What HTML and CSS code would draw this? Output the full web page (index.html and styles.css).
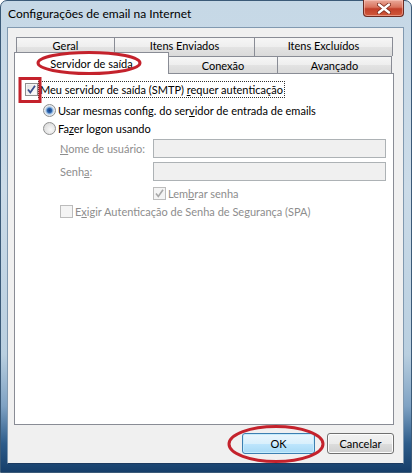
FILE: index.html
```html
<!DOCTYPE html>
<html lang="pt-BR">
<head>
<meta charset="utf-8">
<title>Configurações de email na Internet</title>
<link rel="stylesheet" href="styles.css">
</head>
<body>
<div class="window">
  <div class="titlebar">
    <span class="title">Configurações de email na Internet</span>
    <div class="close">
      <svg width="14" height="11" viewBox="0 0 14 11"><path d="M2 1.5 L12 9.5 M12 1.5 L2 9.5" stroke="#7a2a1c" stroke-width="4" stroke-linecap="round"/><path d="M2 1.5 L12 9.5 M12 1.5 L2 9.5" stroke="#fff" stroke-width="2.4" stroke-linecap="round"/></svg>
    </div>
  </div>
  <div class="client">
    <div class="tabs">
      <div class="tabrow back">
        <div class="tab t-geral">Geral</div>
        <div class="tab t-env">Itens Enviados</div>
        <div class="tab t-exc">Itens Excluídos</div>
      </div>
      <div class="tabrow front">
        <div class="tab selected t-serv">Servidor de saída</div>
        <div class="tab t-con">Conexão</div>
        <div class="tab t-ava">Avançado</div>
      </div>
      <div class="panel">
        <div class="row row-a">
          <span class="check"><svg width="13" height="13" viewBox="0 0 13 13"><path d="M3 6.5 L5.3 9.5 L10 2.8" fill="none" stroke="#3b4f8c" stroke-width="1.8"/></svg></span>
          <span class="focus">Meu servidor de saída (SMTP) <u>r</u>equer autenticação</span>
        </div>
        <div class="row row-b">
          <span class="radio on"></span>
          <span>Usar mesmas config. do ser<u>v</u>idor de entrada de emails</span>
        </div>
        <div class="row row-c">
          <span class="radio"></span>
          <span>Fa<u>z</u>er logon usando</span>
        </div>
        <div class="row field row-d">
          <span class="flabel"><u>N</u>ome de usuário:</span>
          <span class="input"></span>
        </div>
        <div class="row field row-e">
          <span class="flabel">Senh<u>a</u>:</span>
          <span class="input"></span>
        </div>
        <div class="row row-f disabled">
          <span class="check dis"><svg width="13" height="13" viewBox="0 0 13 13"><path d="M3 6.5 L5.3 9.5 L10 2.8" fill="none" stroke="#a8a8a8" stroke-width="1.6"/></svg></span>
          <span>Lem<u>b</u>rar senha</span>
        </div>
        <div class="row row-g disabled">
          <span class="check dis"></span>
          <span>E<u>x</u>igir Autenticação de Senha de Segurança (SPA)</span>
        </div>
      </div>
    </div>
    <div class="buttons">
      <button class="btn default">OK</button>
      <button class="btn">Cancelar</button>
    </div>
  </div>
</div>
<svg class="annot" width="412" height="473" viewBox="0 0 412 473">
  <ellipse cx="89" cy="63" rx="51" ry="10.5" fill="none" stroke="#c4222c" stroke-width="3"/>
  <rect x="20" y="78.5" width="20" height="23" fill="none" stroke="#c4222c" stroke-width="3"/>
  <ellipse cx="276" cy="444" rx="47" ry="17.5" fill="none" stroke="#c4222c" stroke-width="3"/>
</svg>
</body>
</html>
```
FILE: styles.css
```css
html, body {
  margin: 0;
  padding: 0;
}
body {
  width: 412px;
  height: 473px;
  position: relative;
  overflow: hidden;
  font-family: Lato, "Noto Sans", sans-serif;
  font-size: 11px;
  color: #000;
  background: #fff;
}
.window {
  width: 412px;
  height: 473px;
  box-sizing: border-box;
  border: 1px solid #3b5a78;
  border-radius: 7px 7px 0 0;
  background: linear-gradient(to bottom, #c6d8e6 0%, #cbdbe8 40%, #b9cfe0 75%, #7fa2c3 86%, #2d5c8a 94%, #163e6a 100%);
  display: flex;
  flex-direction: column;
}
.titlebar {
  height: 26px;
  display: flex;
  align-items: flex-start;
  justify-content: space-between;
  padding-left: 7px;
}
.title {
  line-height: 26px;
  font-size: 12px;
}
.close {
  width: 41px;
  height: 17px;
  margin-top: -1px;
  margin-right: 7px;
  box-sizing: border-box;
  border: 1px solid #6b2b22;
  border-top: none;
  border-radius: 0 0 4px 4px;
  background: linear-gradient(to bottom, #eaa99a 0%, #d9735d 45%, #c2402a 55%, #d0583a 100%);
  box-shadow: inset 0 0 0 1px rgba(255,210,200,0.5);
  display: flex;
  align-items: center;
  justify-content: center;
}
.client {
  margin: 0 7px 0 6px;
  height: 437px;
  box-sizing: border-box;
  border: 1px solid #8199b0;
  border-bottom-color: #1c3a60;
  background: #f0f0f0;
  padding: 9px 0 0 6px;
}
.tabs {
  width: 380px;
}
.tabrow {
  display: flex;
}
.tabrow.back {
  margin-left: 2px;
  height: 19px;
}
.tabrow.front {
  margin-top: -4px;
  align-items: flex-start;
  height: 21px;
}
.tab {
  box-sizing: border-box;
  border: 1px solid #898c95;
  border-bottom: none;
  background: linear-gradient(to bottom, #f6f6f6 0%, #eeeeee 50%, #e3e3e3 51%, #dadada 100%);
  display: flex;
  align-items: center;
  justify-content: center;
  color: #000;
  margin-left: -1px;
}
.tabrow .tab:first-child {
  margin-left: 0;
}
.back .tab {
  height: 19px;
  align-items: flex-start;
  line-height: 16px;
}
.t-geral { width: 99px; }
.t-env { width: 141px; }
.t-exc { width: 139px; }
.front .tab {
  height: 17px;
  margin-top: 4px;
}
.front .tab.selected {
  height: 22px;
  margin-top: 0;
  background: #fff;
  position: relative;
  z-index: 2;
}
.t-serv { width: 155px; }
.t-con { width: 110px; }
.t-ava { width: 115px; }
.panel {
  position: relative;
  z-index: 1;
  height: 352px;
  box-sizing: border-box;
  border: 1px solid #898c95;
  background: #fff;
  padding-top: 7px;
}
.row {
  display: flex;
  align-items: center;
}
.row-a {
  height: 17px;
  padding-left: 10px;
}
.row-b {
  height: 18px;
  margin-top: 3px;
  padding-left: 28px;
}
.row-c {
  height: 18px;
  padding-left: 28px;
}
.field {
  padding-left: 45px;
  color: #8d8d8d;
}
.row-d {
  margin-top: 2px;
  height: 19px;
}
.row-e {
  margin-top: 4px;
  height: 19px;
}
.flabel {
  width: 93px;
}
.input {
  width: 233px;
  height: 19px;
  box-sizing: border-box;
  border: 1px solid #adb2b5;
  background: #f0f0f0;
}
.disabled {
  color: #8d8d8d;
}
.row-f {
  margin-top: 4px;
  height: 16px;
  padding-left: 138px;
}
.row-g {
  margin-top: 2px;
  height: 16px;
  padding-left: 45px;
}
.check {
  width: 13px;
  height: 13px;
  box-sizing: border-box;
  border: 1px solid #8f8f8f;
  background: linear-gradient(135deg, #dcdcdc 0%, #f5f5f5 60%, #fff 100%);
  box-shadow: inset 0 0 0 1px #f4f4f4;
  margin-right: 2px;
  display: flex;
  align-items: center;
  justify-content: center;
  flex: none;
}
.check svg {
  margin: -1px;
}
.check.dis {
  border-color: #bcbcbc;
  background: #f4f4f4;
}
.row-a .check {
  margin-right: 1px;
}
.focus {
  outline: 1px dotted #333;
  outline-offset: 0;
  padding: 0 1px;
  line-height: 15px;
}
.radio {
  width: 13px;
  height: 13px;
  box-sizing: border-box;
  border-radius: 50%;
  border: 1px solid #8e8f8f;
  background: radial-gradient(circle at 60% 60%, #f9f9f9 0%, #e2e2e2 60%, #cfcfcf 100%);
  margin-right: 2px;
  flex: none;
}
.radio.on {
  background: radial-gradient(circle, #1c3f80 0%, #2d66b0 28%, #8fb5de 42%, #e9eef3 60%, #d3d3d3 100%);
}
.buttons {
  display: flex;
  justify-content: flex-end;
  gap: 12px;
  width: 380px;
  margin-top: 8px;
}
.btn {
  font-family: inherit;
  font-size: 11px;
  color: #000;
  height: 21px;
  box-sizing: border-box;
  border: 1px solid #707070;
  border-radius: 3px;
  background: linear-gradient(to bottom, #f2f2f2 0%, #ebebeb 50%, #dddddd 51%, #cfcfcf 100%);
  box-shadow: inset 0 0 0 1px #fcfcfc;
  padding: 0;
  width: 67px;
}
.btn.default {
  width: 73px;
  border-color: #3c7fb1;
  background: linear-gradient(to bottom, #eaf6fd 0%, #d9f0fc 50%, #bee6fd 51%, #a7d9f5 100%);
  box-shadow: inset 0 0 0 1px #c6ecfc;
}
.annot {
  position: absolute;
  top: 0;
  left: 0;
  z-index: 10;
  pointer-events: none;
}
```
